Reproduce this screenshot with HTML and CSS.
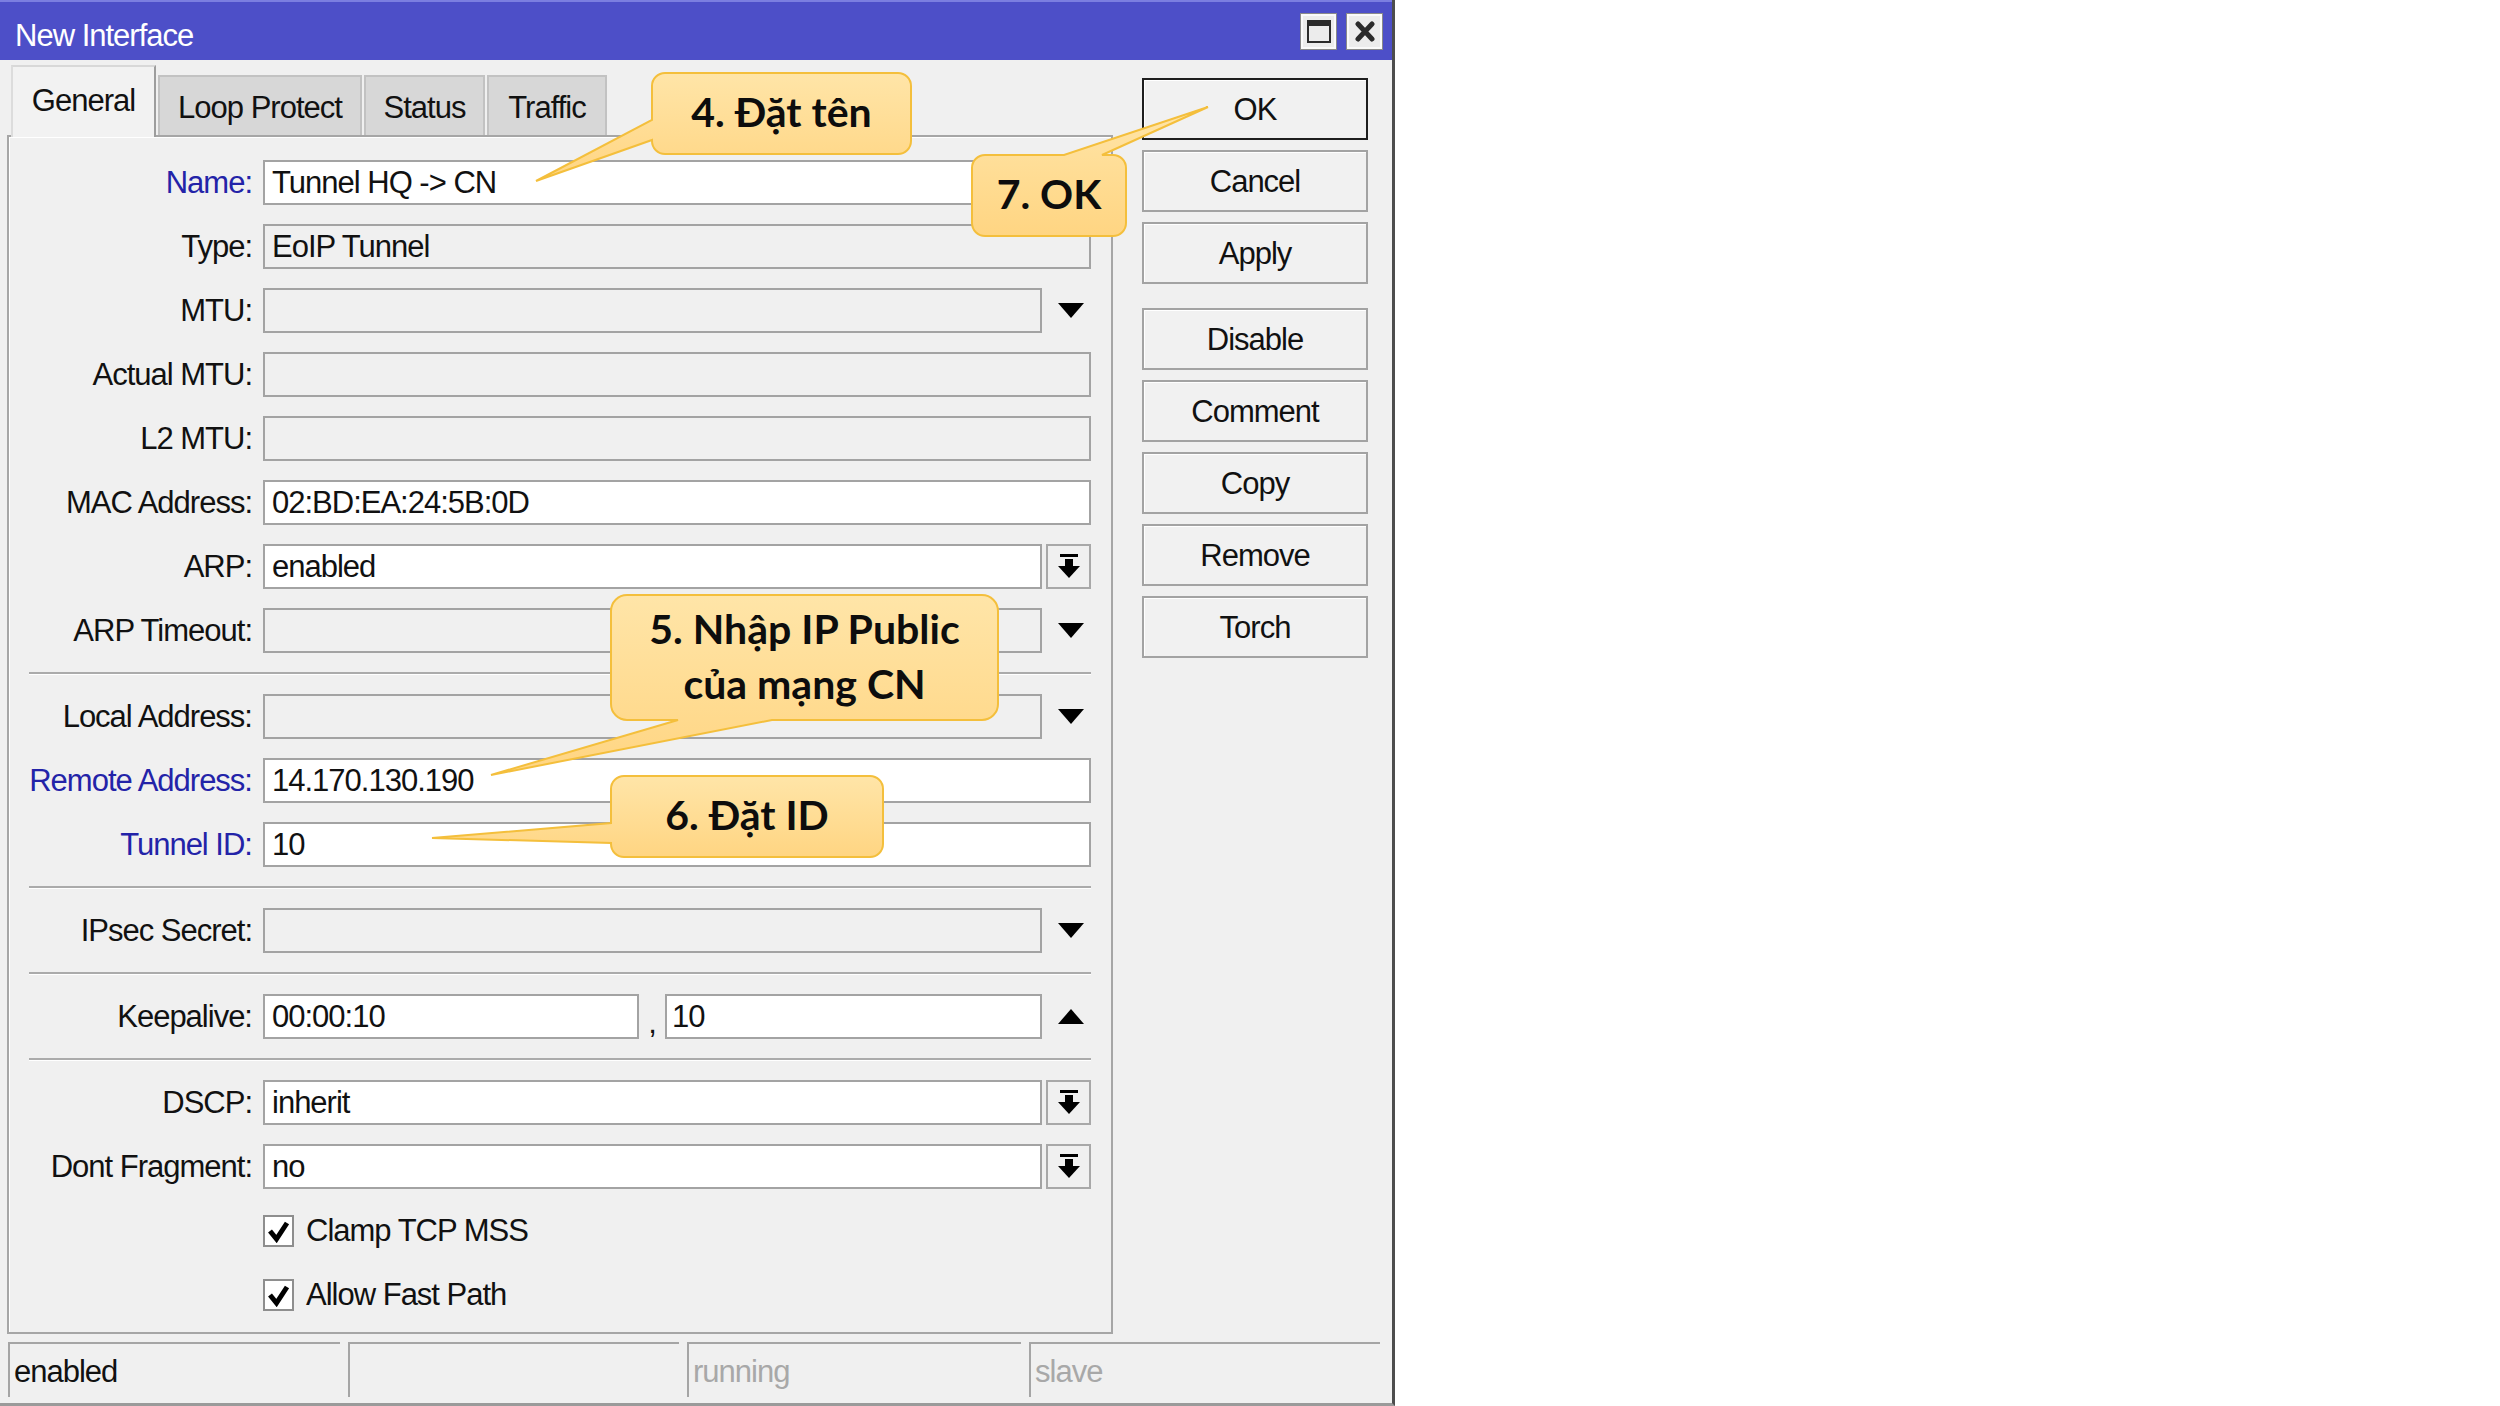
FILE: index.html
```html
<!DOCTYPE html>
<html lang="vi">
<head>
<meta charset="utf-8">
<title>New Interface</title>
<link rel="stylesheet" href="styles.css">
</head>
<body>
<div class="window">
  <div class="titlebar">
    <span class="title">New Interface</span>
    <div class="tbtns">
      <div class="tbtn"><svg width="24" height="23" viewBox="0 0 24 23"><rect x="1" y="1" width="22" height="21" fill="none" stroke="#2b2b2b" stroke-width="2"/><rect x="1" y="1" width="22" height="5" fill="#2b2b2b"/></svg></div>
      <div class="tbtn"><svg width="22" height="21" viewBox="0 0 22 21"><path d="M4 3 L18 18 M18 3 L4 18" stroke="#2b2b2b" stroke-width="5" stroke-linecap="round"/></svg></div>
    </div>
  </div>
  <div class="main">
    <div class="leftcol">
      <div class="tabs">
        <div class="tab active t1">General</div>
        <div class="tab t2">Loop Protect</div>
        <div class="tab t3">Status</div>
        <div class="tab t4">Traffic</div>
      </div>
      <div class="panel">
        <div class="row"><span class="lbl blue">Name:</span><div class="field white">Tunnel HQ -&gt; CN</div></div>
        <div class="row"><span class="lbl">Type:</span><div class="field">EoIP Tunnel</div></div>
        <div class="row"><span class="lbl">MTU:</span><div class="field short"></div><div class="slot"><svg class="tri" width="26" height="15" viewBox="0 0 26 15"><polygon points="0,0 26,0 13,15" fill="#000"/></svg></div></div>
        <div class="row"><span class="lbl">Actual MTU:</span><div class="field"></div></div>
        <div class="row"><span class="lbl">L2 MTU:</span><div class="field"></div></div>
        <div class="row"><span class="lbl">MAC Address:</span><div class="field white">02:BD:EA:24:5B:0D</div></div>
        <div class="row"><span class="lbl">ARP:</span><div class="field short white">enabled</div><div class="slot boxed"><svg width="22" height="25" viewBox="0 0 22 25"><rect x="2" y="0" width="18" height="3" fill="#000"/><rect x="7" y="5" width="8" height="8" fill="#000"/><polygon points="0,12 22,12 11,24" fill="#000"/></svg></div></div>
        <div class="row"><span class="lbl">ARP Timeout:</span><div class="field short"></div><div class="slot"><svg class="tri" width="26" height="15" viewBox="0 0 26 15"><polygon points="0,0 26,0 13,15" fill="#000"/></svg></div></div>
        <div class="sep"></div>
        <div class="row"><span class="lbl">Local Address:</span><div class="field short"></div><div class="slot"><svg class="tri" width="26" height="15" viewBox="0 0 26 15"><polygon points="0,0 26,0 13,15" fill="#000"/></svg></div></div>
        <div class="row"><span class="lbl blue">Remote Address:</span><div class="field white">14.170.130.190</div></div>
        <div class="row"><span class="lbl blue">Tunnel ID:</span><div class="field white">10</div></div>
        <div class="sep"></div>
        <div class="row"><span class="lbl">IPsec Secret:</span><div class="field short"></div><div class="slot"><svg class="tri" width="26" height="15" viewBox="0 0 26 15"><polygon points="0,0 26,0 13,15" fill="#000"/></svg></div></div>
        <div class="sep"></div>
        <div class="row"><span class="lbl">Keepalive:</span><div class="field white kf1">00:00:10</div><span class="comma">,</span><div class="field white kf2">10</div><div class="slot"><svg class="tri" width="26" height="15" viewBox="0 0 26 15"><polygon points="0,15 26,15 13,0" fill="#000"/></svg></div></div>
        <div class="sep"></div>
        <div class="row"><span class="lbl">DSCP:</span><div class="field short white">inherit</div><div class="slot boxed"><svg width="22" height="25" viewBox="0 0 22 25"><rect x="2" y="0" width="18" height="3" fill="#000"/><rect x="7" y="5" width="8" height="8" fill="#000"/><polygon points="0,12 22,12 11,24" fill="#000"/></svg></div></div>
        <div class="row"><span class="lbl">Dont Fragment:</span><div class="field short white">no</div><div class="slot boxed"><svg width="22" height="25" viewBox="0 0 22 25"><rect x="2" y="0" width="18" height="3" fill="#000"/><rect x="7" y="5" width="8" height="8" fill="#000"/><polygon points="0,12 22,12 11,24" fill="#000"/></svg></div></div>
        <div class="row"><span class="lbl"></span><div class="chk"><svg width="24" height="24" viewBox="0 0 24 24"><path d="M3 12 L9.5 20 L20 4" fill="none" stroke="#000" stroke-width="5"/></svg></div><span class="chklbl">Clamp TCP MSS</span></div>
        <div class="row"><span class="lbl"></span><div class="chk"><svg width="24" height="24" viewBox="0 0 24 24"><path d="M3 12 L9.5 20 L20 4" fill="none" stroke="#000" stroke-width="5"/></svg></div><span class="chklbl">Allow Fast Path</span></div>
      </div>
    </div>
    <div class="buttons">
      <div class="btn default">OK</div>
      <div class="btn">Cancel</div>
      <div class="btn">Apply</div>
      <div class="btn spaced">Disable</div>
      <div class="btn">Comment</div>
      <div class="btn">Copy</div>
      <div class="btn">Remove</div>
      <div class="btn">Torch</div>
    </div>
  </div>
  <div class="statusbar">
    <div class="cell c1">enabled</div>
    <div class="cell c2"></div>
    <div class="cell c3 dim">running</div>
    <div class="cell c4 dim">slave</div>
  </div>
</div>

<svg class="callouts" width="2500" height="1406" viewBox="0 0 2500 1406">
  <defs>
    <linearGradient id="cg" x1="0" y1="0" x2="0" y2="1">
      <stop offset="0" stop-color="#ffe5a8"/>
      <stop offset="1" stop-color="#ffd582"/>
    </linearGradient>
  </defs>
  <path d="M665,73 H898 A13,13 0 0 1 911,86 V141 A13,13 0 0 1 898,154 H665 A13,13 0 0 1 652,141 V140 L536,181 L652,120 V86 A13,13 0 0 1 665,73 Z" fill="url(#cg)" stroke="#f4bf3c" stroke-width="2"/>
  <path d="M985,155 H1064 L1208,107 L1102,155 H1113 A13,13 0 0 1 1126,168 V223 A13,13 0 0 1 1113,236 H985 A13,13 0 0 1 972,223 V168 A13,13 0 0 1 985,155 Z" fill="url(#cg)" stroke="#f4bf3c" stroke-width="2"/>
  <path d="M627,595 H982 A16,16 0 0 1 998,611 V704 A16,16 0 0 1 982,720 H772 L491,775 L678,720 H627 A16,16 0 0 1 611,704 V611 A16,16 0 0 1 627,595 Z" fill="url(#cg)" stroke="#f4bf3c" stroke-width="2"/>
  <path d="M624,776 H870 A13,13 0 0 1 883,789 V844 A13,13 0 0 1 870,857 H624 A13,13 0 0 1 611,844 V843 L432,838 L611,823 V789 A13,13 0 0 1 624,776 Z" fill="url(#cg)" stroke="#f4bf3c" stroke-width="2"/>
</svg>
<div class="ctext co4">4. Đặt tên</div>
<div class="ctext co7">7. OK</div>
<div class="ctext co5"><span>5. Nhập IP Public</span><span>của mạng CN</span></div>
<div class="ctext co6">6. Đặt ID</div>
</body>
</html>
```

FILE: styles.css
```css
html, body {
  margin: 0;
  padding: 0;
  background: #ffffff;
}

body {
  width: 2500px;
  height: 1406px;
  overflow: hidden;
  position: relative;
}

.window {
  width: 1395px;
  height: 1406px;
  box-sizing: border-box;
  background: #f0f0f0;
  border-right: 3px solid #4d4d4d;
  border-bottom: 3px solid #9a9a9a;
  display: flex;
  flex-direction: column;
  font-family: "Liberation Sans", Arial, sans-serif;
  font-size: 31px;
  letter-spacing: -1px;
  color: #111;
}

/* title bar */
.titlebar {
  height: 60px;
  flex: 0 0 60px;
  box-sizing: border-box;
  background: #4d4fc8;
  border-top: 2px solid #7b7ee0;
  display: flex;
  align-items: center;
  justify-content: space-between;
  padding: 0 9px 0 15px;
}

.title {
  color: #ffffff;
  padding-top: 10px;
}

.tbtns {
  display: flex;
  gap: 9px;
  align-items: center;
}

.tbtn {
  width: 37px;
  height: 37px;
  box-sizing: border-box;
  background: #ececec;
  border: 1px solid #8a8a8a;
  box-shadow: inset 0 0 0 2px #fafafa;
  display: flex;
  align-items: center;
  justify-content: center;
}

/* main area */
.main {
  height: 1274px;
  flex: 0 0 1274px;
  box-sizing: border-box;
  padding: 5px 0 0 7px;
  display: flex;
}

.leftcol {
  width: 1106px;
  display: flex;
  flex-direction: column;
}

.tabs {
  height: 70px;
  display: flex;
  align-items: flex-end;
  gap: 2px;
  padding-left: 4px;
  position: relative;
  z-index: 2;
}

.tab {
  height: 60px;
  box-sizing: border-box;
  background: #d7d7d7;
  border: 2px solid #c2c2c2;
  border-bottom: none;
  display: flex;
  align-items: center;
  justify-content: center;
  padding-top: 3px;
  color: #111;
}

.tab.active {
  height: 72px;
  margin-bottom: -2px;
  background: #f2f2f2;
  border-top: 2px solid #d8d8d8;
  border-left: 2px solid #dcdcdc;
  border-right: 2px solid #9d9d9d;
  padding-top: 0;
  padding-bottom: 2px;
}

.t1 { width: 145px; }
.t2 { width: 204px; }
.t3 { width: 121px; }
.t4 { width: 120px; }

.panel {
  height: 1199px;
  box-sizing: border-box;
  border: 2px solid #a6a6a6;
  box-shadow: inset 1px 1px 0 #ffffff;
  padding-top: 23px;
  display: flex;
  flex-direction: column;
  gap: 19px;
}

.row {
  height: 45px;
  flex: 0 0 45px;
  display: flex;
  align-items: center;
}

.lbl {
  width: 243px;
  margin-right: 11px;
  text-align: right;
  white-space: nowrap;
  flex: 0 0 243px;
}

.lbl.blue {
  color: #2323a8;
}

.field {
  width: 828px;
  height: 45px;
  box-sizing: border-box;
  border: 2px solid #a3a3a3;
  background: #f0f0f0;
  padding-left: 7px;
  display: flex;
  align-items: center;
  white-space: nowrap;
}

.field.white {
  background: #ffffff;
}

.field.short {
  width: 779px;
}

.field.kf1 {
  width: 376px;
}

.field.kf2 {
  width: 377px;
  padding-left: 5px;
}

.comma {
  width: 26px;
  height: 45px;
  text-align: center;
  line-height: 58px;
}

.slot {
  width: 45px;
  height: 45px;
  margin-left: 4px;
  box-sizing: border-box;
  display: flex;
  align-items: center;
  justify-content: center;
}

.slot .tri {
  margin-left: 5px;
}

.slot.boxed {
  border: 2px solid #a8a8a8;
  background: #f0f0f0;
}

.sep {
  height: 0;
  flex: 0 0 auto;
  margin-left: 20px;
  width: 1062px;
  border-top: 2px solid #ababab;
  border-bottom: 1px solid #ffffff;
}

.chk {
  width: 31px;
  height: 32px;
  box-sizing: border-box;
  border: 2px solid #8e8e8e;
  background: #ffffff;
  display: flex;
  align-items: center;
  justify-content: center;
}

.chklbl {
  margin-left: 12px;
}

/* buttons */
.buttons {
  width: 226px;
  margin-left: 29px;
  margin-top: 13px;
  display: flex;
  flex-direction: column;
  gap: 10px;
}

.btn {
  height: 62px;
  box-sizing: border-box;
  border: 2px solid #a3a3a3;
  background: #f1f1f1;
  box-shadow: inset 1px 1px 0 #ffffff;
  display: flex;
  align-items: center;
  justify-content: center;
  padding-top: 2px;
}

.btn.default {
  border: 2px solid #1e1e1e;
}

.btn.spaced {
  margin-top: 14px;
}

/* status bar */
.statusbar {
  margin-top: 8px;
  height: 55px;
  padding-left: 8px;
  display: flex;
  gap: 8px;
}

.cell {
  height: 55px;
  box-sizing: border-box;
  border-top: 2px solid #a5a5a5;
  border-left: 2px solid #a5a5a5;
  padding-left: 4px;
  display: flex;
  align-items: center;
  padding-top: 2px;
}

.cell.c1 { width: 332px; }
.cell.c2 { width: 331px; }
.cell.c3 { width: 334px; }
.cell.c4 { width: 351px; }

.cell.dim {
  color: #a8a8a8;
}

/* callouts */
.callouts {
  position: absolute;
  left: 0;
  top: 0;
  pointer-events: none;
}

.ctext {
  position: absolute;
  display: flex;
  flex-direction: column;
  align-items: center;
  justify-content: center;
  font-family: Lato, "Open Sans", sans-serif;
  font-weight: 700;
  font-size: 41px;
  line-height: 55px;
  color: #0d0d0d;
  white-space: nowrap;
}

.co4 { left: 652px; top: 71px; width: 259px; height: 81px; }
.co7 { left: 972px; top: 153px; width: 154px; height: 81px; }
.co5 { left: 611px; top: 593px; width: 387px; height: 125px; }
.co6 { left: 611px; top: 774px; width: 272px; height: 81px; }
```
